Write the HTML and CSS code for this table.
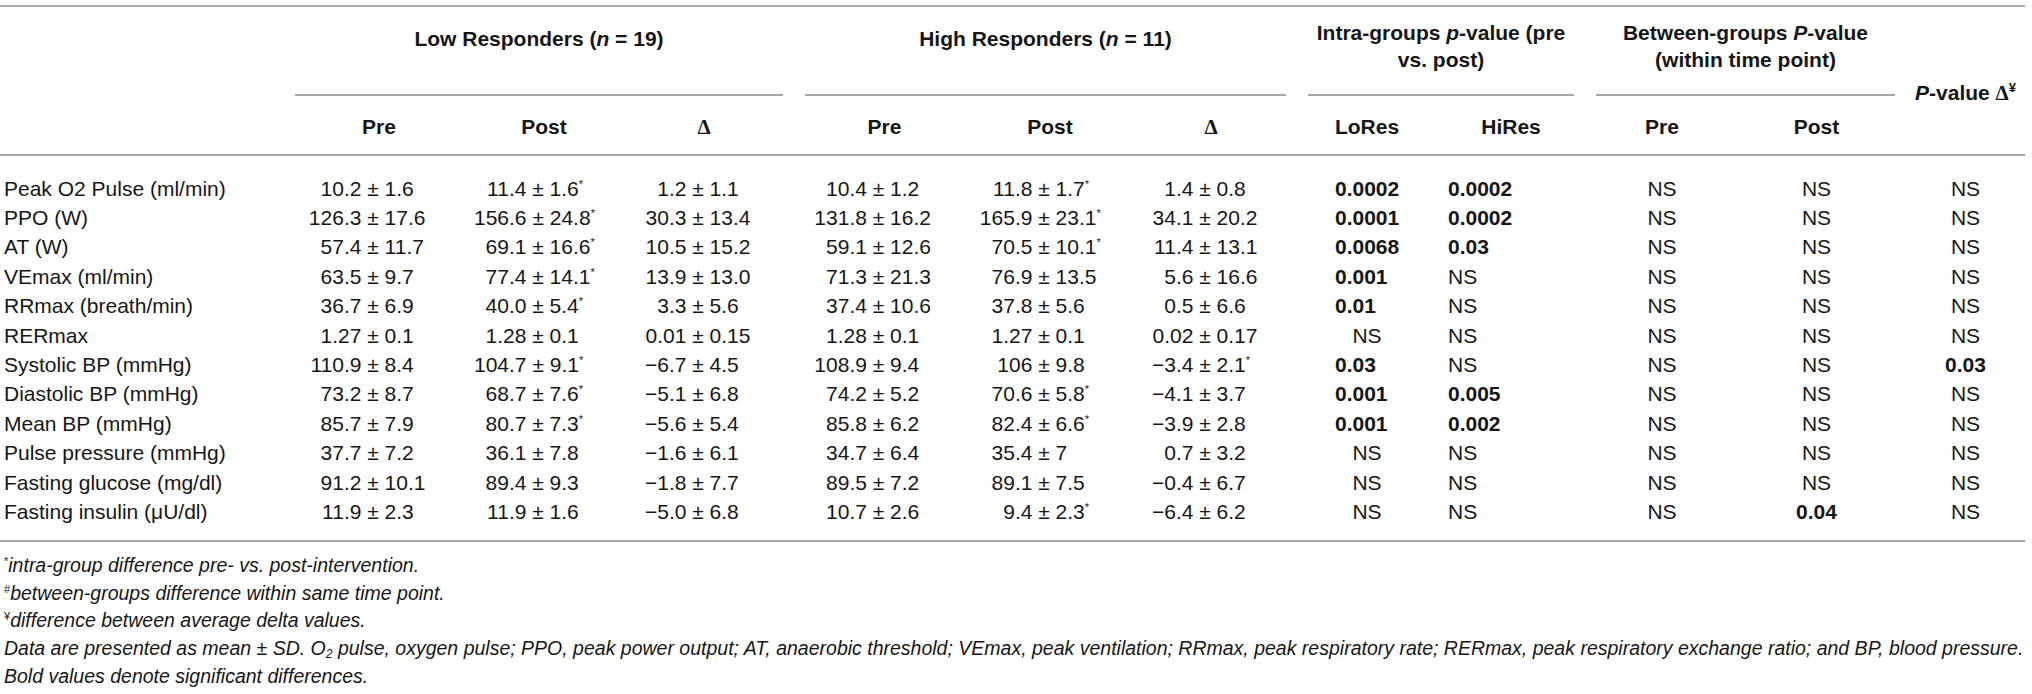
FILE: index.html
```html
<!DOCTYPE html>
<html lang="en">
<head>
<meta charset="utf-8">
<title>Low vs High Responders</title>
<link rel="stylesheet" href="styles.css">
</head>
<body>
<div class="page">
  <div class="thead">
    <div class="h-label"></div>
    <div class="grp span3"><div class="one">Low Responders (<i>n</i> = 19)</div></div>
    <div class="grp span3"><div class="one">High Responders (<i>n</i> = 11)</div></div>
    <div class="grp span2"><div class="two">Intra-groups <i>p</i>-value (pre<br>vs. post)</div></div>
    <div class="grp span2"><div class="two">Between-groups <i>P</i>-value<br>(within time point)</div></div>
    <div class="h-pd"><i>P</i>-value <span class="delta">Δ</span><sup class="yen">¥</sup></div>
    <div class="sub">Pre</div>
    <div class="sub">Post</div>
    <div class="sub"><span class="delta">Δ</span></div>
    <div class="sub">Pre</div>
    <div class="sub">Post</div>
    <div class="sub"><span class="delta">Δ</span></div>
    <div class="sub">LoRes</div>
    <div class="sub">HiRes</div>
    <div class="sub">Pre</div>
    <div class="sub bq">Post</div>
  </div>

  <div class="tbody">
    <div class="row">
      <div class="lbl">Peak O2 Pulse (ml/min)</div>
      <div class="pmv"><span class="a">10.2</span><span class="pm"> ± </span><span class="b">1.6</span></div>
      <div class="pmv"><span class="a">11.4</span><span class="pm"> ± </span><span class="b">1.6<sup class="s">*</sup></span></div>
      <div class="pmv"><span class="a">1.2</span><span class="pm"> ± </span><span class="b">1.1</span></div>
      <div class="pmv"><span class="a">10.4</span><span class="pm"> ± </span><span class="b">1.2</span></div>
      <div class="pmv"><span class="a">11.8</span><span class="pm"> ± </span><span class="b">1.7<sup class="s">*</sup></span></div>
      <div class="pmv"><span class="a">1.4</span><span class="pm"> ± </span><span class="b">0.8</span></div>
      <div class="lo sig">0.0002</div>
      <div class="hi sig">0.0002</div>
      <div class="bp">NS</div>
      <div class="bq">NS</div>
      <div class="pd">NS</div>
    </div>
    <div class="row">
      <div class="lbl">PPO (W)</div>
      <div class="pmv"><span class="a">126.3</span><span class="pm"> ± </span><span class="b">17.6</span></div>
      <div class="pmv"><span class="a">156.6</span><span class="pm"> ± </span><span class="b">24.8<sup class="s">*</sup></span></div>
      <div class="pmv"><span class="a">30.3</span><span class="pm"> ± </span><span class="b">13.4</span></div>
      <div class="pmv"><span class="a">131.8</span><span class="pm"> ± </span><span class="b">16.2</span></div>
      <div class="pmv"><span class="a">165.9</span><span class="pm"> ± </span><span class="b">23.1<sup class="s">*</sup></span></div>
      <div class="pmv"><span class="a">34.1</span><span class="pm"> ± </span><span class="b">20.2</span></div>
      <div class="lo sig">0.0001</div>
      <div class="hi sig">0.0002</div>
      <div class="bp">NS</div>
      <div class="bq">NS</div>
      <div class="pd">NS</div>
    </div>
    <div class="row">
      <div class="lbl">AT (W)</div>
      <div class="pmv"><span class="a">57.4</span><span class="pm"> ± </span><span class="b">11.7</span></div>
      <div class="pmv"><span class="a">69.1</span><span class="pm"> ± </span><span class="b">16.6<sup class="s">*</sup></span></div>
      <div class="pmv"><span class="a">10.5</span><span class="pm"> ± </span><span class="b">15.2</span></div>
      <div class="pmv"><span class="a">59.1</span><span class="pm"> ± </span><span class="b">12.6</span></div>
      <div class="pmv"><span class="a">70.5</span><span class="pm"> ± </span><span class="b">10.1<sup class="s">*</sup></span></div>
      <div class="pmv"><span class="a">11.4</span><span class="pm"> ± </span><span class="b">13.1</span></div>
      <div class="lo sig">0.0068</div>
      <div class="hi sig">0.03</div>
      <div class="bp">NS</div>
      <div class="bq">NS</div>
      <div class="pd">NS</div>
    </div>
    <div class="row">
      <div class="lbl">VEmax (ml/min)</div>
      <div class="pmv"><span class="a">63.5</span><span class="pm"> ± </span><span class="b">9.7</span></div>
      <div class="pmv"><span class="a">77.4</span><span class="pm"> ± </span><span class="b">14.1<sup class="s">*</sup></span></div>
      <div class="pmv"><span class="a">13.9</span><span class="pm"> ± </span><span class="b">13.0</span></div>
      <div class="pmv"><span class="a">71.3</span><span class="pm"> ± </span><span class="b">21.3</span></div>
      <div class="pmv"><span class="a">76.9</span><span class="pm"> ± </span><span class="b">13.5</span></div>
      <div class="pmv"><span class="a">5.6</span><span class="pm"> ± </span><span class="b">16.6</span></div>
      <div class="lo sig">0.001</div>
      <div class="hi">NS</div>
      <div class="bp">NS</div>
      <div class="bq">NS</div>
      <div class="pd">NS</div>
    </div>
    <div class="row">
      <div class="lbl">RRmax (breath/min)</div>
      <div class="pmv"><span class="a">36.7</span><span class="pm"> ± </span><span class="b">6.9</span></div>
      <div class="pmv"><span class="a">40.0</span><span class="pm"> ± </span><span class="b">5.4<sup class="s">*</sup></span></div>
      <div class="pmv"><span class="a">3.3</span><span class="pm"> ± </span><span class="b">5.6</span></div>
      <div class="pmv"><span class="a">37.4</span><span class="pm"> ± </span><span class="b">10.6</span></div>
      <div class="pmv"><span class="a">37.8</span><span class="pm"> ± </span><span class="b">5.6</span></div>
      <div class="pmv"><span class="a">0.5</span><span class="pm"> ± </span><span class="b">6.6</span></div>
      <div class="lo sig">0.01</div>
      <div class="hi">NS</div>
      <div class="bp">NS</div>
      <div class="bq">NS</div>
      <div class="pd">NS</div>
    </div>
    <div class="row">
      <div class="lbl">RERmax</div>
      <div class="pmv"><span class="a">1.27</span><span class="pm"> ± </span><span class="b">0.1</span></div>
      <div class="pmv"><span class="a">1.28</span><span class="pm"> ± </span><span class="b">0.1</span></div>
      <div class="pmv"><span class="a">0.01</span><span class="pm"> ± </span><span class="b">0.15</span></div>
      <div class="pmv"><span class="a">1.28</span><span class="pm"> ± </span><span class="b">0.1</span></div>
      <div class="pmv"><span class="a">1.27</span><span class="pm"> ± </span><span class="b">0.1</span></div>
      <div class="pmv"><span class="a">0.02</span><span class="pm"> ± </span><span class="b">0.17</span></div>
      <div class="lo">NS</div>
      <div class="hi">NS</div>
      <div class="bp">NS</div>
      <div class="bq">NS</div>
      <div class="pd">NS</div>
    </div>
    <div class="row">
      <div class="lbl">Systolic BP (mmHg)</div>
      <div class="pmv"><span class="a">110.9</span><span class="pm"> ± </span><span class="b">8.4</span></div>
      <div class="pmv"><span class="a">104.7</span><span class="pm"> ± </span><span class="b">9.1<sup class="s">*</sup></span></div>
      <div class="pmv"><span class="a">−6.7</span><span class="pm"> ± </span><span class="b">4.5</span></div>
      <div class="pmv"><span class="a">108.9</span><span class="pm"> ± </span><span class="b">9.4</span></div>
      <div class="pmv"><span class="a">106</span><span class="pm"> ± </span><span class="b">9.8</span></div>
      <div class="pmv"><span class="a">−3.4</span><span class="pm"> ± </span><span class="b">2.1<sup class="s">*</sup></span></div>
      <div class="lo sig">0.03</div>
      <div class="hi">NS</div>
      <div class="bp">NS</div>
      <div class="bq">NS</div>
      <div class="pd sig">0.03</div>
    </div>
    <div class="row">
      <div class="lbl">Diastolic BP (mmHg)</div>
      <div class="pmv"><span class="a">73.2</span><span class="pm"> ± </span><span class="b">8.7</span></div>
      <div class="pmv"><span class="a">68.7</span><span class="pm"> ± </span><span class="b">7.6<sup class="s">*</sup></span></div>
      <div class="pmv"><span class="a">−5.1</span><span class="pm"> ± </span><span class="b">6.8</span></div>
      <div class="pmv"><span class="a">74.2</span><span class="pm"> ± </span><span class="b">5.2</span></div>
      <div class="pmv"><span class="a">70.6</span><span class="pm"> ± </span><span class="b">5.8<sup class="s">*</sup></span></div>
      <div class="pmv"><span class="a">−4.1</span><span class="pm"> ± </span><span class="b">3.7</span></div>
      <div class="lo sig">0.001</div>
      <div class="hi sig">0.005</div>
      <div class="bp">NS</div>
      <div class="bq">NS</div>
      <div class="pd">NS</div>
    </div>
    <div class="row">
      <div class="lbl">Mean BP (mmHg)</div>
      <div class="pmv"><span class="a">85.7</span><span class="pm"> ± </span><span class="b">7.9</span></div>
      <div class="pmv"><span class="a">80.7</span><span class="pm"> ± </span><span class="b">7.3<sup class="s">*</sup></span></div>
      <div class="pmv"><span class="a">−5.6</span><span class="pm"> ± </span><span class="b">5.4</span></div>
      <div class="pmv"><span class="a">85.8</span><span class="pm"> ± </span><span class="b">6.2</span></div>
      <div class="pmv"><span class="a">82.4</span><span class="pm"> ± </span><span class="b">6.6<sup class="s">*</sup></span></div>
      <div class="pmv"><span class="a">−3.9</span><span class="pm"> ± </span><span class="b">2.8</span></div>
      <div class="lo sig">0.001</div>
      <div class="hi sig">0.002</div>
      <div class="bp">NS</div>
      <div class="bq">NS</div>
      <div class="pd">NS</div>
    </div>
    <div class="row">
      <div class="lbl">Pulse pressure (mmHg)</div>
      <div class="pmv"><span class="a">37.7</span><span class="pm"> ± </span><span class="b">7.2</span></div>
      <div class="pmv"><span class="a">36.1</span><span class="pm"> ± </span><span class="b">7.8</span></div>
      <div class="pmv"><span class="a">−1.6</span><span class="pm"> ± </span><span class="b">6.1</span></div>
      <div class="pmv"><span class="a">34.7</span><span class="pm"> ± </span><span class="b">6.4</span></div>
      <div class="pmv"><span class="a">35.4</span><span class="pm"> ± </span><span class="b">7</span></div>
      <div class="pmv"><span class="a">0.7</span><span class="pm"> ± </span><span class="b">3.2</span></div>
      <div class="lo">NS</div>
      <div class="hi">NS</div>
      <div class="bp">NS</div>
      <div class="bq">NS</div>
      <div class="pd">NS</div>
    </div>
    <div class="row">
      <div class="lbl">Fasting glucose (mg/dl)</div>
      <div class="pmv"><span class="a">91.2</span><span class="pm"> ± </span><span class="b">10.1</span></div>
      <div class="pmv"><span class="a">89.4</span><span class="pm"> ± </span><span class="b">9.3</span></div>
      <div class="pmv"><span class="a">−1.8</span><span class="pm"> ± </span><span class="b">7.7</span></div>
      <div class="pmv"><span class="a">89.5</span><span class="pm"> ± </span><span class="b">7.2</span></div>
      <div class="pmv"><span class="a">89.1</span><span class="pm"> ± </span><span class="b">7.5</span></div>
      <div class="pmv"><span class="a">−0.4</span><span class="pm"> ± </span><span class="b">6.7</span></div>
      <div class="lo">NS</div>
      <div class="hi">NS</div>
      <div class="bp">NS</div>
      <div class="bq">NS</div>
      <div class="pd">NS</div>
    </div>
    <div class="row">
      <div class="lbl">Fasting insulin (μU/dl)</div>
      <div class="pmv"><span class="a">11.9</span><span class="pm"> ± </span><span class="b">2.3</span></div>
      <div class="pmv"><span class="a">11.9</span><span class="pm"> ± </span><span class="b">1.6</span></div>
      <div class="pmv"><span class="a">−5.0</span><span class="pm"> ± </span><span class="b">6.8</span></div>
      <div class="pmv"><span class="a">10.7</span><span class="pm"> ± </span><span class="b">2.6</span></div>
      <div class="pmv"><span class="a">9.4</span><span class="pm"> ± </span><span class="b">2.3<sup class="s">*</sup></span></div>
      <div class="pmv"><span class="a">−6.4</span><span class="pm"> ± </span><span class="b">6.2</span></div>
      <div class="lo">NS</div>
      <div class="hi">NS</div>
      <div class="bp">NS</div>
      <div class="bq sig">0.04</div>
      <div class="pd">NS</div>
    </div>
  </div>

  <div class="notes">
    <p><sup>*</sup>intra-group difference pre- vs. post-intervention.</p>
    <p><sup>#</sup>between-groups difference within same time point.</p>
    <p><sup>¥</sup>difference between average delta values.</p>
    <p>Data are presented as mean ± SD. O<sub>2</sub> pulse, oxygen pulse; PPO, peak power output; AT, anaerobic threshold; VEmax, peak ventilation; RRmax, peak respiratory rate; RERmax, peak respiratory exchange ratio; and BP, blood pressure.</p>
    <p>Bold values denote significant differences.</p>
  </div>
</div>
</body>
</html>
```

FILE: styles.css
```css
:root {
  --cols: 284px 190px 140px 180px 181px 150px 172px 140px 148px 154px 167px 119px;
  --rule: #a8a8a8;
}

* { box-sizing: border-box; }

html, body {
  margin: 0;
  padding: 0;
  background: #ffffff;
}

body {
  font-family: "Liberation Sans", Arial, sans-serif;
  font-size: 21px;
  color: #161616;
}

.page {
  width: 2025px;
  padding-top: 5px;
}

/* ---------- header ---------- */
.thead {
  display: grid;
  grid-template-columns: var(--cols);
  grid-template-rows: 89px 58px;
  border-top: 2px solid var(--rule);
  border-bottom: 2px solid var(--rule);
  font-weight: bold;
  line-height: 27px;
  text-align: center;
}

.h-label { grid-row: span 2; }

.grp {
  margin: 0 11px;
  border-bottom: 2px solid var(--rule);
  white-space: nowrap;
}
.grp.span3 { grid-column: span 3; }
.grp.span2 { grid-column: span 2; }
.grp .one { padding-top: 18px; }
.grp .two { padding-top: 12px; }

.h-pd {
  grid-row: span 2;
  padding-top: 72px;
  white-space: nowrap;
}

.sub {
  padding-top: 17px;
}

.delta {
  font-family: "Liberation Serif", "Times New Roman", serif;
  font-weight: bold;
}

.yen {
  font-size: 13px;
  line-height: 0;
  vertical-align: 8px;
}

/* ---------- body ---------- */
.tbody {
  padding: 17.6px 0 13.6px;
  border-bottom: 2px solid var(--rule);
}

.row {
  display: grid;
  grid-template-columns: var(--cols);
  height: 29.4px;
  line-height: 29.4px;
  white-space: nowrap;
}

.lbl { padding-left: 4px; }

.pmv {
  display: flex;
  padding-right: 12px;
}
.pmv .a { flex: 1; text-align: right; }
.pmv .pm { white-space: pre; }
.pmv .b { flex: 1; text-align: left; }

.s {
  font-size: 11px;
  line-height: 0;
  vertical-align: 8px;
}

.lo { text-align: center; }
.lo.sig { text-align: left; padding-left: 38px; }
.hi { text-align: left; padding-left: 11px; }
.bp { text-align: center; }
.bq { text-align: center; padding-right: 12px; }
.pd { text-align: center; }
.sig { font-weight: bold; }

/* ---------- footnotes ---------- */
.notes {
  margin-top: 10px;
  padding-left: 4px;
  font-style: italic;
  font-size: 19.5px;
  line-height: 27.75px;
  white-space: nowrap;
}
.notes p { margin: 0; }
.notes sup {
  font-style: normal;
  font-size: 11px;
  line-height: 0;
  vertical-align: 7px;
}
.notes sub {
  font-size: 12px;
  line-height: 0;
  vertical-align: -3px;
}
```
